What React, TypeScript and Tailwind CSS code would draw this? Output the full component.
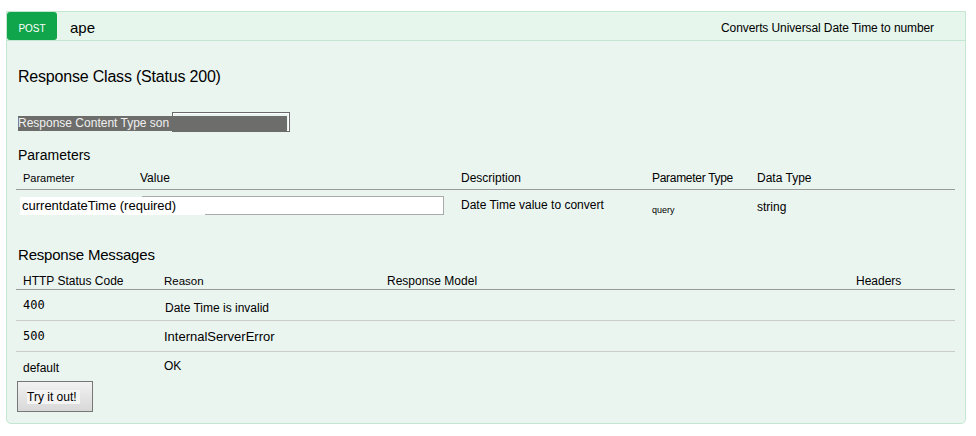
export default function App() {
  return (
    <div className="w-[976px] h-[436px] bg-white pt-[11px] pl-[6px] font-['Liberation_Sans',Arial,sans-serif] text-black">
      <div className="w-[960px] h-[413px] border border-[#c3e6d0] rounded-b-[5px] bg-[#ebf5f0] flex flex-col overflow-hidden">
        {/* header */}
        <div className="h-[29px] bg-[#e7f6ec] border-b border-[#c3e6d0] flex items-start">
          <div className="w-[50px] h-[28px] bg-[#10a54a] rounded-[3px] text-white text-[10px] leading-[12px] flex justify-center pt-[11px]">
            POST
          </div>
          <div className="ml-[13px] mt-[7px] text-[15px] leading-[17px]">ape</div>
          <div className="ml-auto mr-[31px] mt-[9px] text-[12px] leading-[14px] tracking-[-0.1px]">
            Converts Universal Date Time to number
          </div>
        </div>

        {/* body */}
        <div className="flex-1 pl-[9px] flex flex-col">
          <div className="mt-[27px] pl-[2px] text-[16px] leading-[18px] tracking-[-0.2px]">
            Response Class (Status 200)
          </div>

          <div className="relative mt-[26px] h-[20px]">
            <div className="absolute left-[156px] top-0 w-[118px] h-[20px] border border-[#6b6b6b] bg-[#ebf5f0] shadow-[inset_0_0_0_1px_#ffffff]" />
            <div className="relative ml-[2px] mt-[4px] w-[269px] h-[15px] bg-[#6d6d6b] text-[12px] leading-[15px] text-[#f0f0f0]">
              Response Content Type son
            </div>
          </div>

          <div className="mt-[15px] pl-[2px] text-[14px] leading-[16px]">Parameters</div>

          {/* parameters table */}
          <div className="w-[939px]">
            <div className="h-[27px] border-b border-[#9a9a9a] flex items-end pb-[4px] text-[12px] leading-[14px]">
              <div className="w-[124px] pl-[7px] text-[11px]">Parameter</div>
              <div className="w-[321px]">Value</div>
              <div className="w-[191px]">Description</div>
              <div className="w-[105px] tracking-[-0.3px]">Parameter Type</div>
              <div>Data Type</div>
            </div>
            <div className="h-[36px] flex items-start">
              <div className="w-[445px] flex items-start pl-[4px] pt-[6px]">
                <div className="relative z-10 mt-[1px] w-[185px] h-[18px] bg-white pl-[2px] text-[13px] leading-[18px]">
                  currentdateTime (required)
                </div>
                <input
                  type="text"
                  className="-ml-[63px] w-[302px] h-[19px] border border-[#aaaaaa] bg-white outline-none"
                />
              </div>
              <div className="w-[191px] mt-[8px] text-[12px] leading-[14px]">Date Time value to convert</div>
              <div className="w-[105px] mt-[15px] text-[9px] leading-[10px]">query</div>
              <div className="mt-[10px] text-[12px] leading-[14px]">string</div>
            </div>
          </div>

          <div className="mt-[20px] pl-[2px] text-[15px] leading-[17px] tracking-[-0.2px]">Response Messages</div>

          {/* responses table */}
          <div className="w-[939px] text-[12px] leading-[14px]">
            <div className="h-[27px] border-b border-[#9a9a9a] flex items-end pb-[1px]">
              <div className="w-[148px] pl-[7px]">HTTP Status Code</div>
              <div className="w-[223px] text-[11.5px]">Reason</div>
              <div className="w-[469px]">Response Model</div>
              <div>Headers</div>
            </div>
            <div className="h-[31px] border-b border-[#cccccc] flex items-start">
              <div className="w-[148px] pl-[7px] mt-[8px] font-['DejaVu_Sans_Mono',monospace] text-[12px]">400</div>
              <div className="mt-[11px] pl-[1px]">Date Time is invalid</div>
            </div>
            <div className="h-[31px] border-b border-[#cccccc] flex items-start">
              <div className="w-[148px] pl-[7px] mt-[8px] font-['DejaVu_Sans_Mono',monospace] text-[12px]">500</div>
              <div className="mt-[8px] text-[13px] leading-[15px]">InternalServerError</div>
            </div>
            <div className="h-[29px] flex items-start">
              <div className="w-[148px] pl-[7px] mt-[9px]">default</div>
              <div className="mt-[7px]">OK</div>
            </div>
          </div>

          <button className="ml-[1px] w-[76px] h-[31px] border border-[#777777] bg-gradient-to-b from-[#f2f2f2] to-[#d8d8d8] flex items-center pl-[9px] text-[12px] leading-[14px] text-black">
            <span className="bg-[#f4f4f4] pr-[3px]">Try it out!</span>
          </button>
        </div>
      </div>
    </div>
  );
}
